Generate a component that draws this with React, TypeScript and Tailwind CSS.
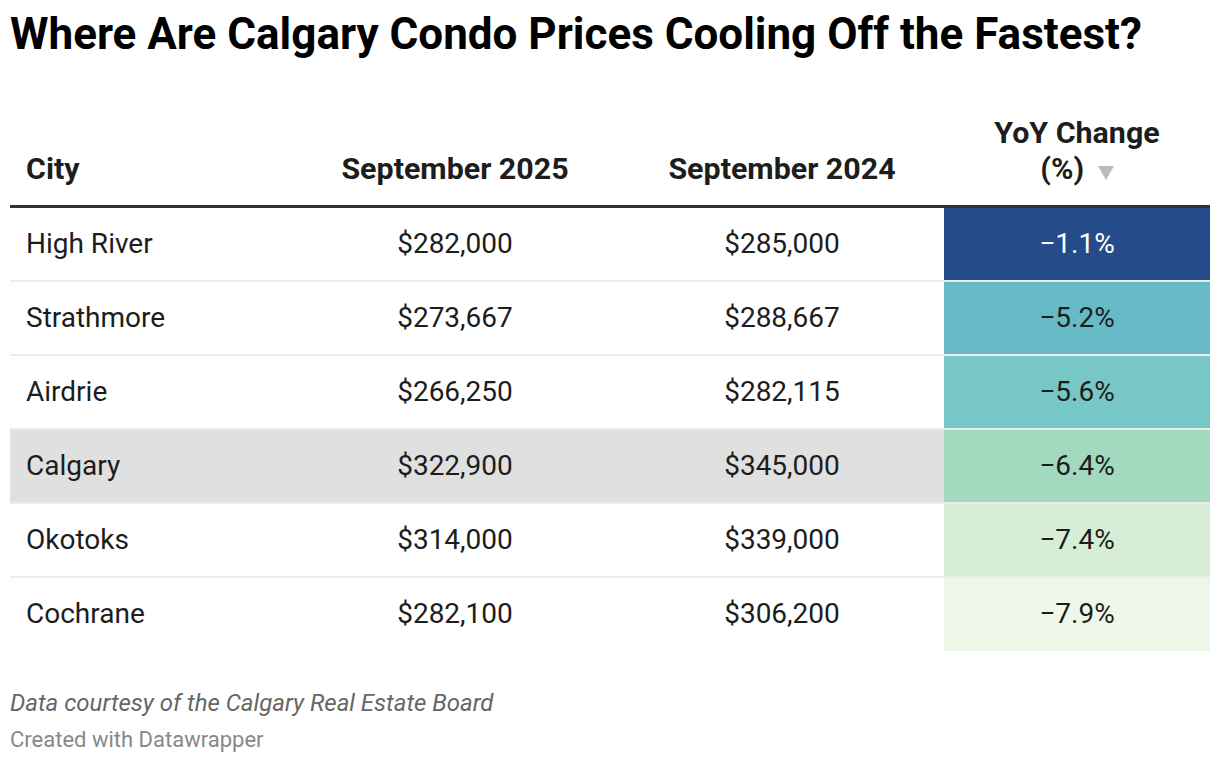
const rows = [
  { city: 'High River', s25: '$282,000', s24: '$285,000', yoy: '−1.1%', bg: 'bg-[#254b8b]', fg: 'text-white' },
  { city: 'Strathmore', s25: '$273,667', s24: '$288,667', yoy: '−5.2%', bg: 'bg-[#67bbc6]', fg: 'text-[#1d1d1d]' },
  { city: 'Airdrie', s25: '$266,250', s24: '$282,115', yoy: '−5.6%', bg: 'bg-[#77c7c6]', fg: 'text-[#1d1d1d]' },
  { city: 'Calgary', s25: '$322,900', s24: '$345,000', yoy: '−6.4%', bg: 'bg-[#a2d9bf]', fg: 'text-[#1d1d1d]', hl: true },
  { city: 'Okotoks', s25: '$314,000', s24: '$339,000', yoy: '−7.4%', bg: 'bg-[#d6eed6]', fg: 'text-[#1d1d1d]' },
  { city: 'Cochrane', s25: '$282,100', s24: '$306,200', yoy: '−7.9%', bg: 'bg-[#eff8e8]', fg: 'text-[#1d1d1d]' },
]

export default function App() {
  return (
    <div className="w-[1220px] h-[764px] bg-white px-[10px] pt-[8px] text-[#1d1d1d] font-['Roboto',sans-serif]">
      <h1 className="text-[44px] leading-[52px] font-bold text-black">
        Where Are Calgary Condo Prices Cooling Off the Fastest?
      </h1>

      <table className="mt-[55px] w-[1200px] table-fixed border-collapse">
        <thead>
          <tr className="border-b-[3px] border-[#333333] align-bottom">
            <th className="w-[280px] pl-[16px] pb-[18px] text-left text-[30.4px] leading-[36px] font-bold">City</th>
            <th className="w-[330px] pb-[18px] text-center text-[30.4px] leading-[36px] font-bold">September 2025</th>
            <th className="w-[324px] pb-[18px] text-center text-[30.4px] leading-[36px] font-bold">September 2024</th>
            <th className="w-[266px] pb-[18px] text-center text-[30.4px] leading-[36px] font-bold">
              YoY Change
              <br />
              (%){' '}
              <svg className="ml-[6px] inline-block align-[-1px]" width="16" height="14" viewBox="0 0 16 14">
                <path d="M0 0 H16 L8 14 Z" fill="#bbbbbb" />
              </svg>
            </th>
          </tr>
        </thead>
        <tbody>
          {rows.map((r, i) => (
            <tr
              key={r.city}
              className={
                (r.hl ? 'bg-[#e0e0e0] border-t-2 border-t-[#d0d0d0] ' : '') +
                (i < rows.length - 1 ? 'border-b-2 border-[#ececec]' : '')
              }
            >
              <td className="h-[74px] pl-[16px] text-left text-[28px]">{r.city}</td>
              <td className="h-[74px] text-center text-[28px]">{r.s25}</td>
              <td className="h-[74px] text-center text-[28px]">{r.s24}</td>
              <td className={`h-[74px] text-center text-[28px] ${r.bg} ${r.fg}`}>{r.yoy}</td>
            </tr>
          ))}
        </tbody>
      </table>

      <p className="mt-[36px] text-[24px] leading-[32px] italic text-[#666666]">
        Data courtesy of the Calgary Real Estate Board
      </p>
      <p className="mt-[6px] text-[22px] leading-[30px] text-[#888888]">Created with Datawrapper</p>
    </div>
  )
}
